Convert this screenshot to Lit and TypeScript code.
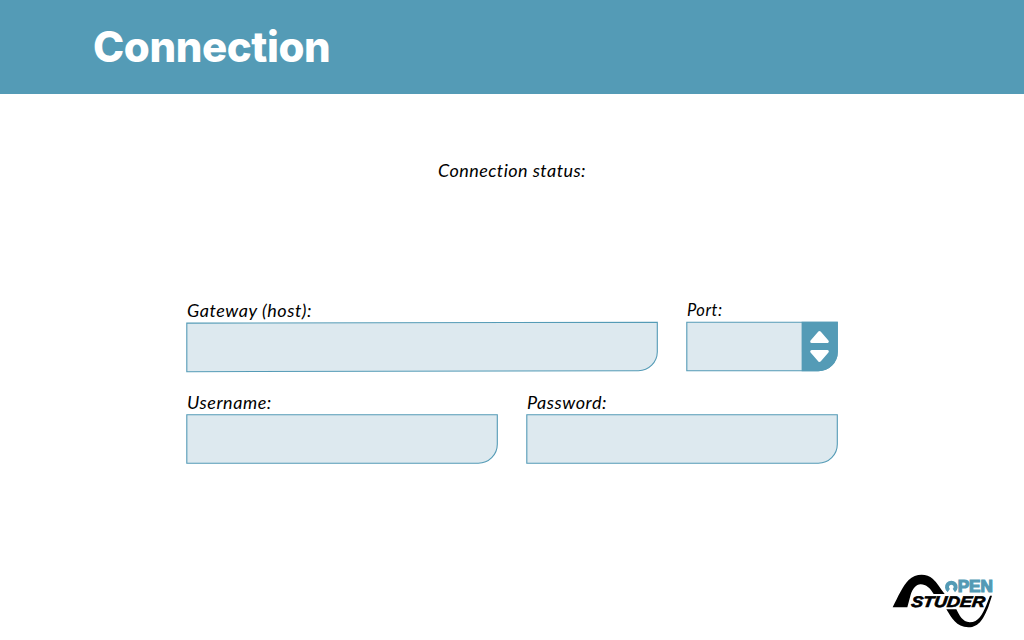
import { LitElement, html, css } from "lit";
import { customElement } from "lit/decorators.js";

@customElement("studer-logo")
class StuderLogo extends LitElement {
  static styles = css`
    :host { display: block; width: 120px; height: 70px; }
    svg { display: block; }
    text { font-family: "Liberation Sans", Arial, sans-serif; font-weight: 700; }
    .open { fill: #539ab5; stroke: #539ab5; stroke-width: 3.500; font-size: 49px; }
    .studer { fill: #000; stroke: #000; stroke-width: 2; font-size: 46px; font-style: italic; }
  `;
  render() {
    return html`<svg width="120" height="70" viewBox="0 0 360 210">
      <path d="M26 124 C42 92 56 60 74 42 C94 22 128 22 146 38 C160 50 168 66 182 84 L149 84 C139 67 126 55 110 55 C96 55 86 68 80 86 L70 124 Z" />
      <path d="M187 130 L217 130 C226 148 236 168 257 169 C284 169 295 144 306 120 L318 89 L324 89 L313 123 C300 154 287 184 253 184 C217 184 202 154 187 130 Z" />
      <text class="studer" x="0" y="0" transform="translate(80 122) skewX(-7)" textLength="221" lengthAdjust="spacingAndGlyphs">STUDER</text>
      <path fill="none" stroke="#539ab5" stroke-width="12" d="M194.500 73.500 A13 13 0 1 1 209.500 73.500" />
      <text class="open" x="221" y="78" textLength="106" lengthAdjust="spacingAndGlyphs">PEN</text>
    </svg>`;
  }
}

@customElement("app-root")
class AppRoot extends LitElement {
  static styles = css`
    :host {
      display: flex; flex-direction: column; width: 1024px; height: 640px;
      overflow: hidden; background: #fff; color: #000;
      font-family: Lato, "Open Sans", sans-serif;
    }
    header { flex: none; height: 94px; background: #549bb6; padding-left: 93px; box-sizing: border-box; }
    h1 { margin: 0; font: 800 42px/94px Inter, sans-serif; color: #fff; letter-spacing: -.42px; }
    .status { margin: 65px 0 0; text-align: center; font-style: italic; font-size: 18px; line-height: 22px; letter-spacing: .45px; }
    form { margin: 117px 0 0 186px; width: 652px; }
    .row { display: flex; justify-content: space-between; }
    .second { margin-top: 17px; }
    label { display: block; }
    .caption { display: block; height: 24px; padding-left: 1px; font-style: italic; font-size: 18px; line-height: 24px; white-space: nowrap; letter-spacing: .55px; }
    .port { font-size: 16.5px; line-height: 25px; letter-spacing: .5px; }
    svg { display: block; overflow: visible; }
    .box { fill: #dde9ef; stroke: #549bb6; stroke-width: 1.1; }
    .spin { fill: #549bb6; }
    .arrow { fill: #fff; stroke: #fff; stroke-width: 3; stroke-linejoin: round; }
    footer { margin-top: auto; padding: 0 20px 4px 0; display: flex; justify-content: flex-end; }
  `;

  private field(caption: string, width: number) {
    const r = width - 0.7;
    return html`<label><span class="caption">${caption}</span>
      <svg width=${width} height="50"><path class="box" d="M.8 .8 H${r} V30.200 A19 19 0 0 1 ${r - 19} 49.200 H.8 Z" /></svg></label>`;
  }

  render() {
    return html`
      <header><h1>Connection</h1></header>
      <p class="status">Connection status:</p>
      <form>
        <div class="row">
          <label><span class="caption">Gateway (host):</span>
            <svg width="472" height="51"><path class="box" d="M.8 1.100 L471.3 .2 V30 A19 19 0 0 1 452.5 48.700 L.8 49.700 Z" /></svg></label>
          <label><span class="caption port">Port:</span>
            <svg width="152" height="50">
              <path class="box" d="M.8 .3 H151.3 V29.7 A19 19 0 0 1 132.3 48.700 H.8 Z" />
              <path class="spin" d="M115.6 -.2 H151.8 V29.7 A19.500 19.500 0 0 1 132.3 49.200 H115.6 Z" />
              <path class="arrow" d="M133.500 10.600 L141.300 19.600 H125.700 Z M133.500 38.400 L141.300 29.400 H125.700 Z" />
            </svg></label>
        </div>
        <div class="row second">${this.field("Username:", 312)}${this.field("Password:", 312)}</div>
      </form>
      <footer><studer-logo></studer-logo></footer>`;
  }
}
